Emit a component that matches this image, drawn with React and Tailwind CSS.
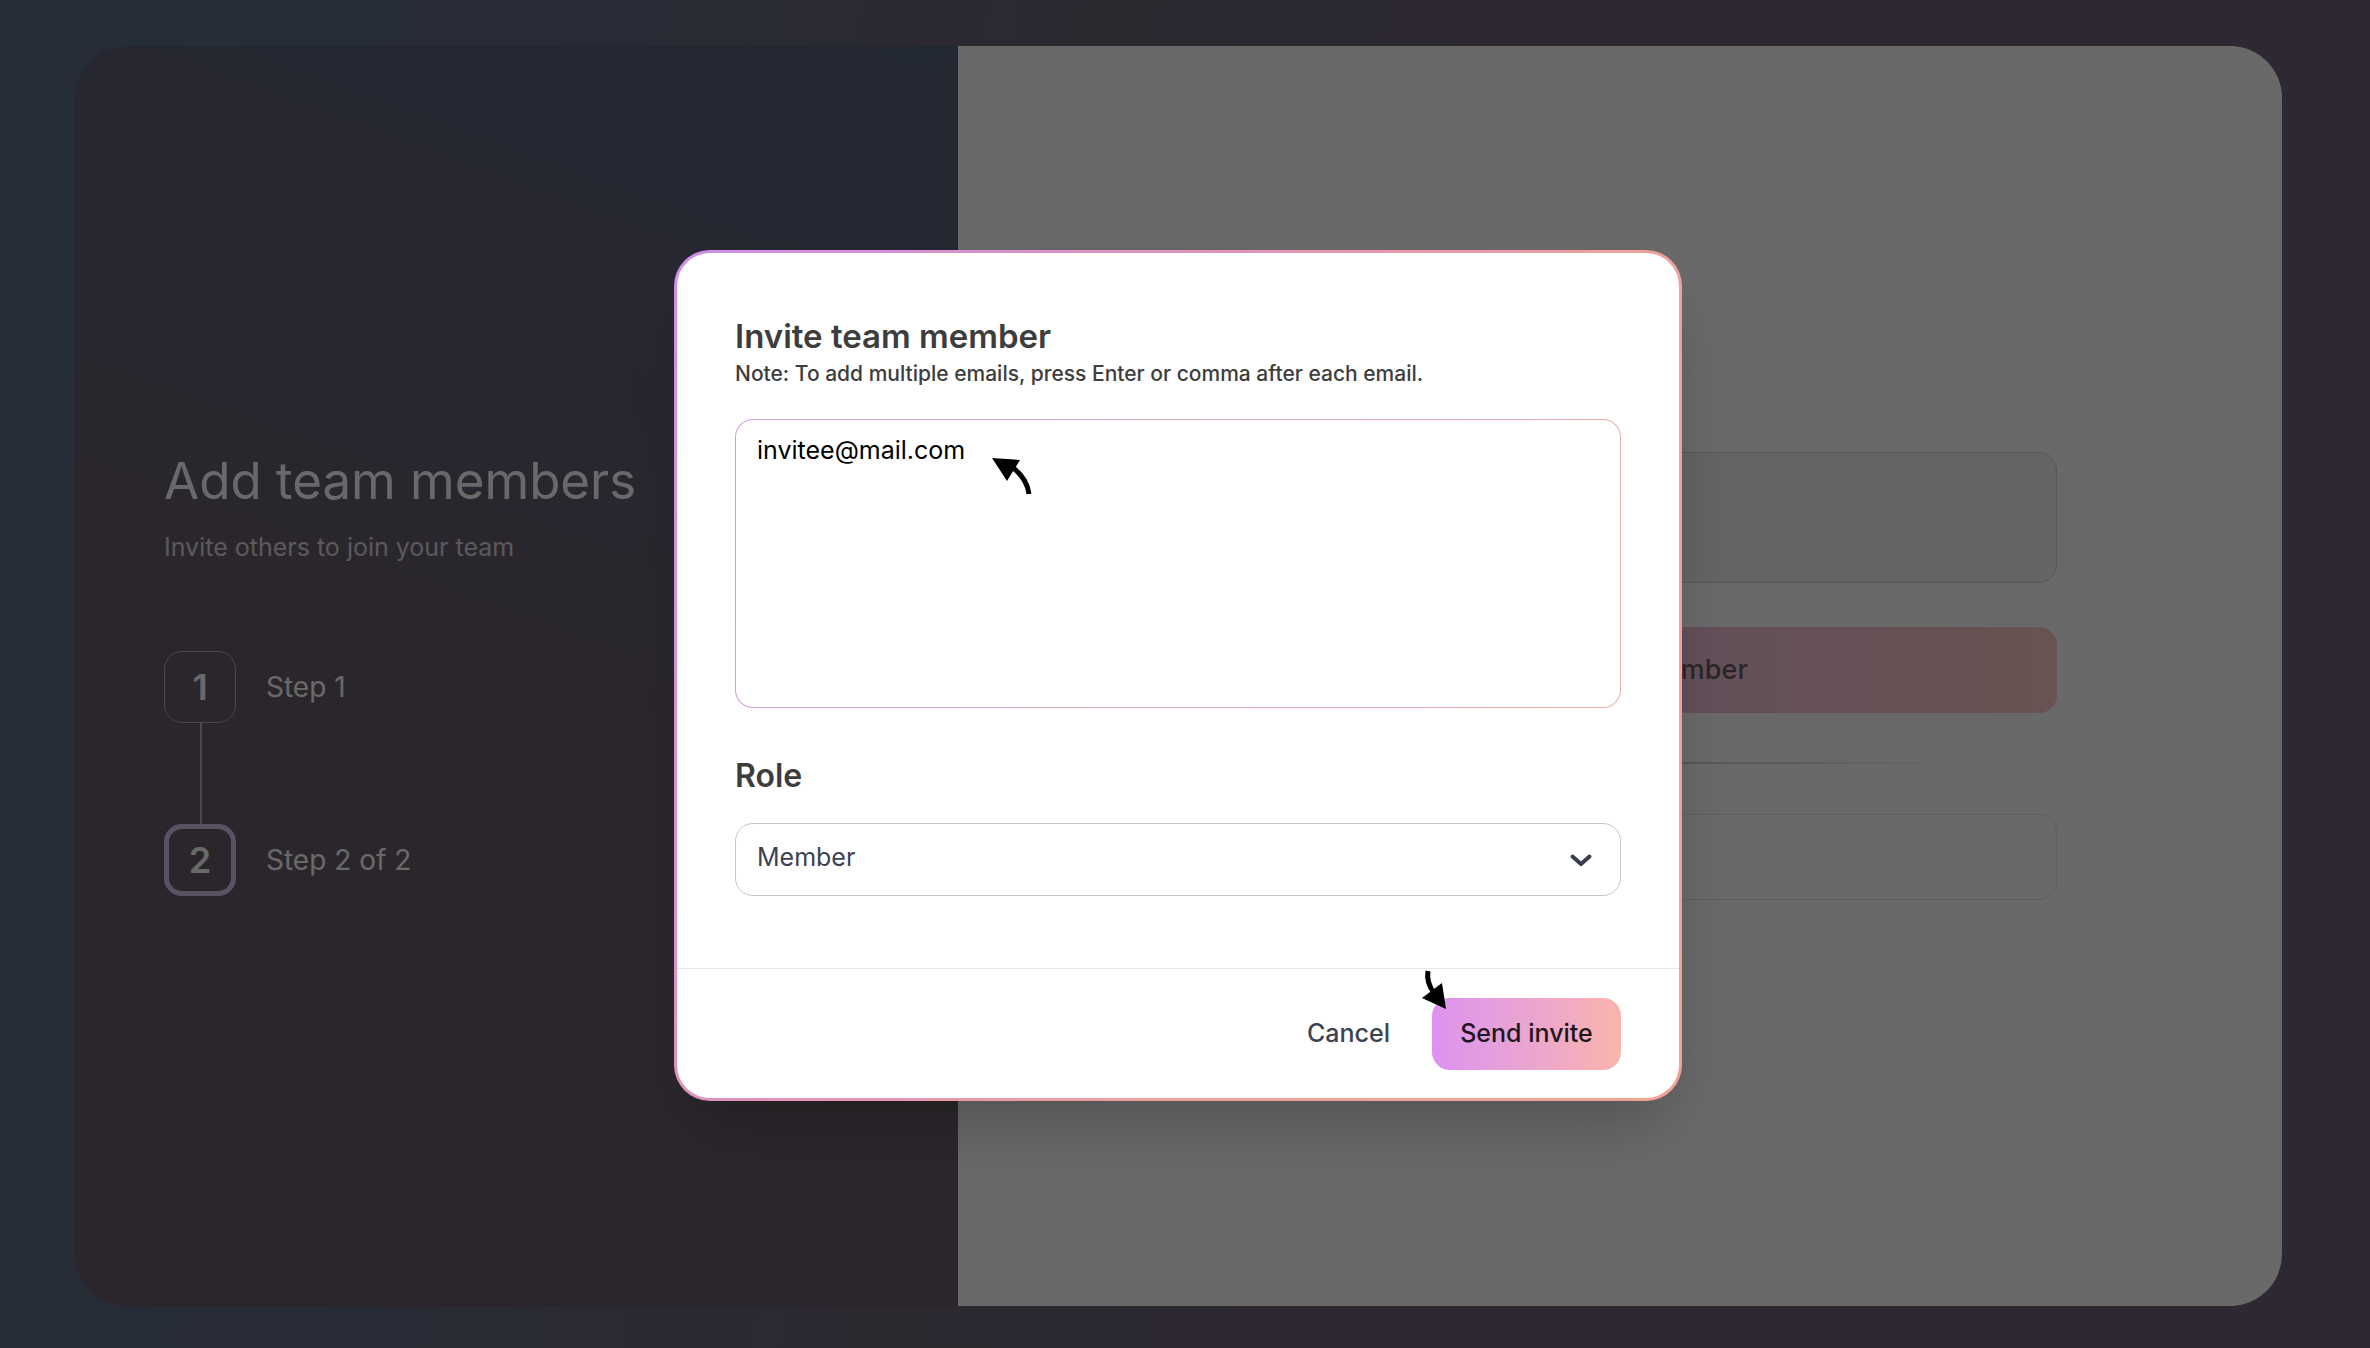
const steps = [
  { number: "1", label: "Step 1", current: false },
  { number: "2", label: "Step 2 of 2", current: true },
];

function Steps() {
  return (
    <ol className="mt-[88px] flex flex-col">
      {steps.map((step, index) => (
        <li key={step.number}>
          {index > 0 && <div className="ml-9 h-[101px] w-0.5 bg-[#b4afba]" />}
          <div className="flex items-center gap-[30px]">
            <span
              className={
                step.current
                  ? "grid size-[72px] place-items-center rounded-[18px] border-[5px] border-[#d5c8f0] text-[36px] font-semibold text-white"
                  : "grid size-[72px] place-items-center rounded-[18px] border border-[#b4afba] text-[36px] font-semibold text-white"
              }
            >
              {step.number}
            </span>
            <span className="text-[28px] text-white">{step.label}</span>
          </div>
        </li>
      ))}
    </ol>
  );
}

function SetupPage() {
  return (
    <main className="grid min-h-screen bg-[linear-gradient(100deg,#5a6f88_0%,#606c86_18%,#6c6478_42%,#70627a_100%)] pt-[46px] pr-[88px] pb-[42px] pl-[75px]">
      <div className="grid grid-cols-[2fr_3fr] overflow-hidden rounded-[52px]">
        <section className="flex flex-col justify-center bg-[linear-gradient(200deg,#54627c_0%,#605f76_28%,#685e6a_52%,#685e6a_100%)] px-[89px] pb-1.5 text-white">
          <h1 className="text-[51px] leading-[60px]">Add team members</h1>
          <p className="mt-5 text-[25px] leading-8 text-[#dcd8e0]">Invite others to join your team</p>
          <Steps />
        </section>
        <section className="flex flex-col justify-center bg-white px-[17%]">
          <div className="h-[131px] rounded-[18px] border border-[#d4d4d8] bg-[#f2f2f3]" />
          <button
            type="button"
            className="mt-11 h-[86px] rounded-[18px] bg-linear-to-r from-[#dc92f0] to-[#fab4ac] text-[27px] font-medium text-[#1f1720] opacity-70"
          >
            Invite team member
          </button>
          <div className="mx-[84px] mt-[49px] h-0.5 bg-linear-to-r from-white via-[#c8c8c8] to-white" />
          <div className="mt-[50px] h-[86px] rounded-[18px] border border-[#e4e4e6]" />
        </section>
      </div>
    </main>
  );
}

function InviteDialog() {
  return (
    <form
      role="dialog"
      aria-labelledby="invite-title"
      className="w-[1008px] max-w-full rounded-[36px] bg-[linear-gradient(120deg,#cd8ee6_0%,#e093b8_38%,#f0a09c_65%,#f2a294_100%)] p-[3px] shadow-[0_36px_72px_-18px_rgba(0,0,0,0.25)]"
    >
      <div className="rounded-[33px] bg-white">
        <div className="px-[58px] pt-[61px] pb-[72px]">
          <label htmlFor="emails" id="invite-title" className="block text-[33px] leading-[44px] font-semibold text-[#3d3d3d]">
            Invite team member
          </label>
          <p className="text-[21px] leading-8 font-medium text-[#3d3d3d]">
            Note: To add multiple emails, press Enter or comma after each email.
          </p>
          <div className="relative mt-[29px] rounded-[18px] bg-[linear-gradient(110deg,#cf9cdc,#eeb0a8)] p-px">
            <textarea
              id="emails"
              defaultValue="invitee@mail.com"
              className="block h-[287px] w-full resize-none rounded-[17px] bg-white px-[21px] py-3 text-[25px] leading-9 text-black outline-none"
            />
            <svg className="absolute top-[38px] left-[257px] h-10 w-10" viewBox="0 0 40 40" aria-hidden="true">
              <path d="M0 1 28 3 15 24Z" fill="black" />
              <path d="M20 10Q35 21 37 37" fill="none" stroke="black" strokeWidth="5" />
            </svg>
          </div>
          <label htmlFor="role" className="mt-[46px] block text-[32px] leading-[44px] font-semibold text-[#3d3d3d]">
            Role
          </label>
          <div className="relative mt-[25px]">
            <select
              id="role"
              defaultValue="Member"
              className="block h-[73px] w-full appearance-none rounded-[18px] border border-[#c6c6c8] bg-white px-[21px] pb-0.5 text-[25px] text-[#3c4252] outline-none"
            >
              <option>Member</option>
              <option>Admin</option>
            </select>
            <svg className="pointer-events-none absolute top-[30px] right-[28px] h-4 w-6" viewBox="0 0 24 16" fill="none" aria-hidden="true">
              <path d="m3.500 3.500 8.500 7.500 8.500-7.500" stroke="#3a3d4d" strokeWidth="4" strokeLinecap="round" strokeLinejoin="round" />
            </svg>
          </div>
        </div>
        <div className="flex items-center justify-end gap-2.5 border-t border-[#e6e6e8] px-[58px] pt-[29px] pb-7">
          <button type="button" className="h-[72px] px-8 text-[25px] font-medium text-[#3c4252]">
            Cancel
          </button>
          <button type="submit" className="relative h-[72px] w-[189px] rounded-[18px] bg-linear-to-r from-[#dc92f0] to-[#fab4ac] text-[25px] font-medium text-[#1f1720]">
            Send invite
            <svg className="absolute -top-7 -left-2.5 h-10 w-6" viewBox="0 0 24 40" aria-hidden="true">
              <path d="M0 28 20 13 24 39Z" fill="black" />
              <path d="M6 1Q4 12 12 23" fill="none" stroke="black" strokeWidth="5" />
            </svg>
          </button>
        </div>
      </div>
    </form>
  );
}

export default function App() {
  return (
    <div className="min-h-screen font-['Inter',sans-serif]">
      <SetupPage />
      <div className="fixed inset-0 grid place-items-center bg-black/59 pr-3.5 pt-0.5">
        <InviteDialog />
      </div>
    </div>
  );
}
